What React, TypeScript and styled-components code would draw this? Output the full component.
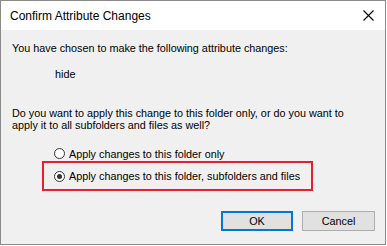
import React from "react";
import styled, { createGlobalStyle } from "styled-components";

const Global = createGlobalStyle`
  html, body { margin: 0; padding: 0; background: #ffffff; }
  body { font-family: "Liberation Sans", Arial, sans-serif; }
`;

const Window = styled.div`
  box-sizing: border-box;
  width: 386px;
  height: 245px;
  border: 1px solid #8a8a8a;
  background: #f0f0f0;
  display: flex;
  flex-direction: column;
`;

const TitleBar = styled.div`
  height: 29px;
  background: #ffffff;
  display: flex;
  align-items: center;
  justify-content: space-between;
  padding: 0 9px 0 9px;
`;

const Title = styled.span`
  font-size: 12px;
  color: #000;
`;

const Close = styled.svg`
  width: 11px;
  height: 11px;
  margin-right: 2px;
`;

const Body = styled.div`
  flex: 1;
  display: flex;
  flex-direction: column;
  padding: 12px 10px 0 11px;
  font-size: 10.8px;
  line-height: 12px;
  color: #000;
`;

const Text = styled.p<{ $indent?: number; $mt?: number }>`
  margin: ${(p) => p.$mt ?? 0}px 0 0 ${(p) => p.$indent ?? 0}px;
  white-space: nowrap;
`;

const Options = styled.div`
  display: flex;
  flex-direction: column;
  margin-top: 16px;
`;

const RadioRow = styled.label`
  display: flex;
  align-items: center;
  gap: 4px;
  height: 13px;
  white-space: nowrap;
`;

const PlainRow = styled(RadioRow)`
  margin-left: 42px;
`;

const Highlight = styled.div`
  box-sizing: border-box;
  margin: 1px 0 0 30px;
  width: 271px;
  height: 30px;
  border: 2px solid #e8202c;
  padding: 0 0 0 10px;
  display: flex;
  align-items: center;
`;

const Circle = styled.span<{ $checked?: boolean }>`
  box-sizing: border-box;
  flex: none;
  width: 11px;
  height: 11px;
  border-radius: 50%;
  border: 1px solid #333333;
  background: #ffffff;
  display: flex;
  align-items: center;
  justify-content: center;
  &::after {
    content: "";
    display: ${(p) => (p.$checked ? "block" : "none")};
    width: 5px;
    height: 5px;
    border-radius: 50%;
    background: #333333;
  }
`;

const Buttons = styled.div`
  display: flex;
  justify-content: flex-end;
  gap: 9px;
  margin-top: 20px;
`;

const Button = styled.button<{ $default?: boolean }>`
  box-sizing: border-box;
  width: ${(p) => (p.$default ? 72 : 73)}px;
  height: 20px;
  padding: 0;
  font-family: "Liberation Sans", Arial, sans-serif;
  font-size: 10.8px;
  color: #000;
  background: #e1e1e1;
  border: ${(p) => (p.$default ? "2px solid #0078d7" : "1px solid #adadad")};
`;

export default function App() {
  return (
    <>
      <Global />
      <Window>
        <TitleBar>
          <Title>Confirm Attribute Changes</Title>
          <Close viewBox="0 0 11 11">
            <path d="M0.5 0.5 L10.5 10.5 M10.5 0.5 L0.5 10.5" stroke="#000" strokeWidth="1.1" />
          </Close>
        </TitleBar>
        <Body>
          <Text>You have chosen to make the following attribute changes:</Text>
          <Text $indent={43} $mt={14}>hide</Text>
          <Text $mt={27}>
            Do you want to apply this change to this folder only, or do you want to
            <br />
            apply it to all subfolders and files as well?
          </Text>
          <Options>
            <PlainRow>
              <Circle />
              Apply changes to this folder only
            </PlainRow>
            <Highlight>
              <RadioRow>
                <Circle $checked />
                Apply changes to this folder, subfolders and files
              </RadioRow>
            </Highlight>
          </Options>
          <Buttons>
            <Button $default>OK</Button>
            <Button>Cancel</Button>
          </Buttons>
        </Body>
      </Window>
    </>
  );
}
